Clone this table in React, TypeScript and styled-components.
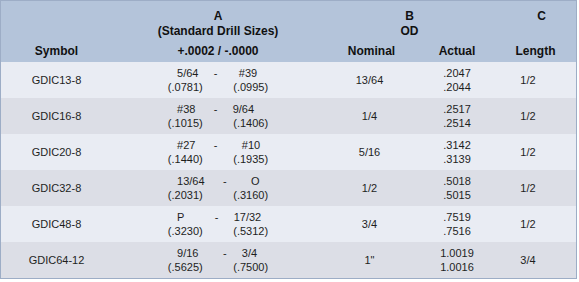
import React from "react";
import styled, { createGlobalStyle } from "styled-components";

const Global = createGlobalStyle`
  html, body { margin: 0; padding: 0; background: #ffffff; }
  body { font-family: "Liberation Sans", Arial, sans-serif; }
`;

const Frame = styled.div`
  width: 575px;
  border: 1px solid #9dadc6;
  background: #b4c4da;
`;

const Table = styled.table`
  width: 575px;
  table-layout: fixed;
  border-collapse: separate;
  border-spacing: 0;
  font-family: "Liberation Sans", Arial, sans-serif;
`;

const Head = styled.thead`
  background: #b4c4da;
`;

const Th = styled.th<{ $top?: boolean; $shift?: number }>`
  padding: ${(p) => (p.$top ? "8px 0 1px" : "4px 0 3px")};
  padding-left: ${(p) => (p.$shift && p.$shift > 0 ? p.$shift : 0)}px;
  vertical-align: ${(p) => (p.$top ? "top" : "bottom")};
  font-size: 12px;
  line-height: 15px;
  font-weight: bold;
  color: #111111;
  text-align: center;
  white-space: nowrap;
`;

const Tr = styled.tr<{ $alt: boolean }>`
  height: 36px;
  background: ${(p) => (p.$alt ? "#dcdee6" : "#e9ecf3")};
`;

const Td = styled.td<{ $padRight?: number }>`
  padding: 0 ${(p) => p.$padRight ?? 0}px 0 0;
  vertical-align: middle;
  text-align: center;
  font-size: 11px;
  line-height: 14px;
  color: #1e1e1e;
`;

const Range = styled.div`
  display: inline-block;
  text-align: left;
  white-space: pre;
`;

const Line = styled.div`
  white-space: pre;
`;

const sp = (n: number) => " ".repeat(n);

type Row = {
  sym: string;
  from: [string, string];
  to: [string, string];
  gaps: [number, number];
  nom: string;
  act: [string, string];
  len: string;
};

const rows: Row[] = [
  { sym: "GDIC13-8", from: ["5/64", "(.0781)"], to: ["#39", "(.0995)"], gaps: [5, 7], nom: "13/64", act: [".2047", ".2044"], len: "1/2" },
  { sym: "GDIC16-8", from: ["#38", "(.1015)"], to: ["9/64", "(.1406)"], gaps: [6, 5], nom: "1/4", act: [".2517", ".2514"], len: "1/2" },
  { sym: "GDIC20-8", from: ["#27", "(.1440)"], to: ["#10", "(.1935)"], gaps: [6, 8], nom: "5/16", act: [".3142", ".3139"], len: "1/2" },
  { sym: "GDIC32-8", from: ["13/64", "(.2031)"], to: ["O", "(.3160)"], gaps: [6, 8], nom: "1/2", act: [".5018", ".5015"], len: "1/2" },
  { sym: "GDIC48-8", from: ["P", "(.3230)"], to: ["17/32", "(.5312)"], gaps: [10, 5], nom: "3/4", act: [".7519", ".7516"], len: "1/2" },
  { sym: "GDIC64-12", from: ["9/16", "(.5625)"], to: ["3/4", "(.7500)"], gaps: [8, 5], nom: '1"', act: ["1.0019", "1.0016"], len: "3/4" },
];

export default function App() {
  return (
    <>
      <Global />
      <Frame>
        <Table>
          <colgroup>
            <col style={{ width: 111 }} />
            <col style={{ width: 212 }} />
            <col style={{ width: 95 }} />
            <col style={{ width: 76 }} />
            <col style={{ width: 81 }} />
          </colgroup>
          <Head>
            <tr style={{ height: 39 }}>
              <Th rowSpan={2}>Symbol</Th>
              <Th $top>
                A
                <br />
                (Standard Drill Sizes)
              </Th>
              <Th $top colSpan={2}>
                B
                <br />
                OD
              </Th>
              <Th $top $shift={12}>C</Th>
            </tr>
            <tr style={{ height: 22 }}>
              <Th>+.0002 / -.0000</Th>
              <Th>Nominal</Th>
              <Th>Actual</Th>
              <Th>Length</Th>
            </tr>
          </Head>
          <tbody>
            {rows.map((r, i) => (
              <Tr key={r.sym} $alt={i % 2 === 1}>
                <Td>{r.sym}</Td>
                <Td>
                  <Range>
                    <Line>{sp(3) + r.from[0] + sp(r.gaps[0]) + "-" + sp(r.gaps[1]) + r.to[0]}</Line>
                    <Line>{r.from[1] + sp(10) + r.to[1]}</Line>
                  </Range>
                </Td>
                <Td $padRight={4}>{r.nom}</Td>
                <Td>
                  {r.act[0]}
                  <br />
                  {r.act[1]}
                </Td>
                <Td $padRight={15}>{r.len}</Td>
              </Tr>
            ))}
          </tbody>
        </Table>
      </Frame>
    </>
  );
}
